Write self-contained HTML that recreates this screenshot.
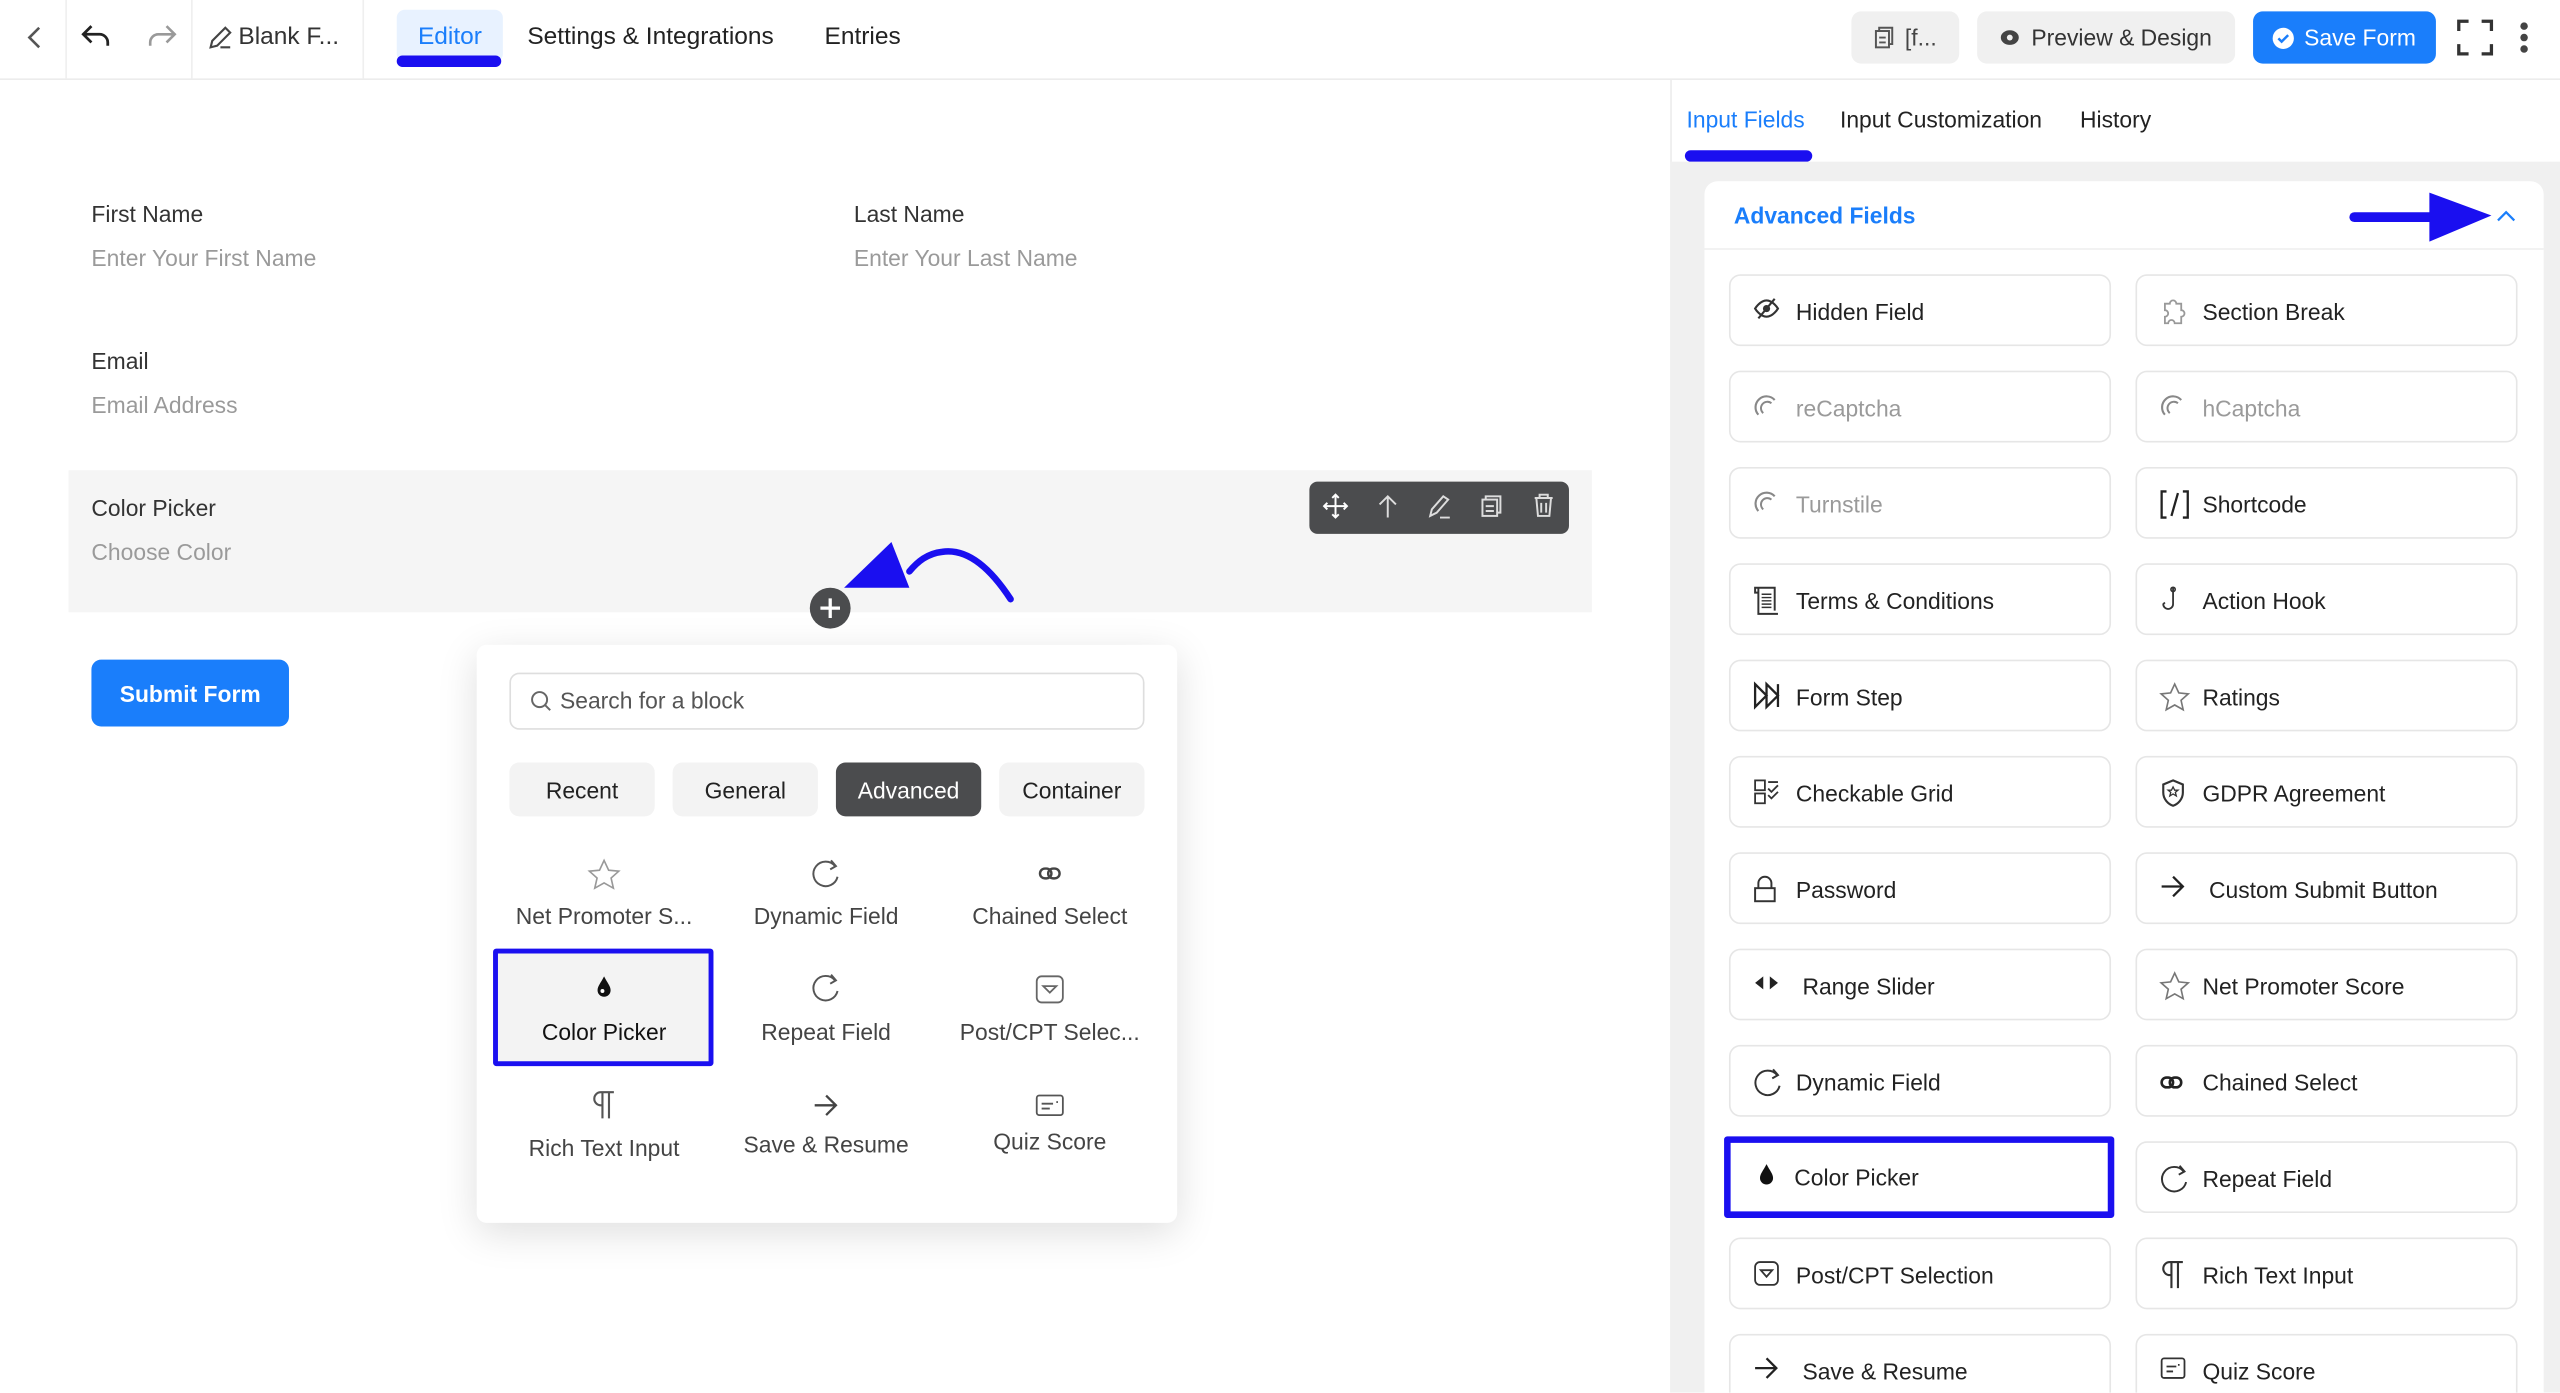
<!DOCTYPE html>
<html><head><meta charset="utf-8">
<style>
*{box-sizing:border-box;margin:0;padding:0}
html,body{width:2560px;height:1393px;overflow:hidden;background:#fff}
#w{position:absolute;left:0;top:0;width:1568px;height:853px;overflow:hidden;transform:scale(1.632653);transform-origin:0 0;font-family:"Liberation Sans",Arial,sans-serif;color:#1e1f21}
.a{position:absolute}
.t{font-size:15px;white-space:nowrap}
svg{position:absolute;overflow:visible}
.btn{position:absolute;border-radius:6px;display:flex;align-items:center;justify-content:center;font-size:14px;font-weight:600}
.it{position:absolute;width:234px;height:44px;background:#fff;border:1px solid #e6e6e6;border-radius:7px}
.it span{position:absolute;left:40px;top:14px;font-size:14px;color:#222;white-space:nowrap}
.it svg{left:14px;top:13px}
.it.dim span{color:#9a9a9a}
.g{position:absolute;width:136px;text-align:center;font-size:14px;color:#444}
</style></head><body><div id="w">

<div class="a" style="left:0;top:48px;width:1568px;height:1px;background:#ececec"></div>
<div class="a" style="left:40px;top:0;width:1px;height:48px;background:#efefef"></div>
<div class="a" style="left:117px;top:0;width:1px;height:48px;background:#efefef"></div>
<div class="a" style="left:222px;top:0;width:1px;height:48px;background:#efefef"></div>
<svg style="left:15px;top:16px" width="12" height="14"><path d="M9 1L3 7l6 6" fill="none" stroke="#555" stroke-width="1.6"/></svg>
<svg style="left:50px;top:15px" width="18" height="14"><path d="M6 1L1 6l5 5M1 6h10a5 5 0 0 1 5 5v2" fill="none" stroke="#222" stroke-width="1.7"/></svg>
<svg style="left:90px;top:15px" width="18" height="14"><path d="M12 1l5 5-5 5M17 6H7a5 5 0 0 0-5 5v2" fill="none" stroke="#999" stroke-width="1.6"/></svg>
<svg style="left:127px;top:15px" width="16" height="16"><path d="M2 14l1-4 8-8 3 3-8 8zM8 14h6" fill="none" stroke="#444" stroke-width="1.3"/></svg>
<div class="a t" style="left:146px;top:14px;font-weight:500;color:#333">Blank F...</div>
<div class="a" style="left:243px;top:6px;width:65px;height:32px;background:#e8f2ff;border-radius:5px"></div>
<div class="a t" style="left:256px;top:14px;color:#1a7efb">Editor</div>
<div class="a" style="left:243px;top:34px;width:64px;height:7px;background:#1a0ff0;border-radius:4px"></div>
<div class="a t" style="left:323px;top:14px;color:#222">Settings &amp; Integrations</div>
<div class="a t" style="left:505px;top:14px;color:#222">Entries</div>

<div class="btn" style="left:1134px;top:7px;width:66px;height:32px;background:#f0f0f0;color:#444;font-weight:500">
<svg style="position:static;margin-right:7px" width="12" height="14"><rect x="1" y="3" width="8" height="10" fill="none" stroke="#555" stroke-width="1.2"/><path d="M3 3V1h8v10H9M3 7h4M3 10h4" fill="none" stroke="#555" stroke-width="1.2"/></svg>[f...</div>
<div class="btn" style="left:1211px;top:7px;width:158px;height:32px;background:#f0f0f0;color:#333;font-weight:500">
<svg style="position:static;margin-right:7px" width="12" height="10"><ellipse cx="6" cy="5" rx="5.5" ry="4.5" fill="#444"/><circle cx="6" cy="5" r="1.8" fill="#f0f0f0"/></svg>Preview &amp; Design</div>
<div class="btn" style="left:1380px;top:7px;width:112px;height:32px;background:#1a7efb;color:#fff;font-weight:500">
<svg style="position:static;margin-right:6px" width="13" height="13"><circle cx="6.5" cy="6.5" r="6.5" fill="#fff"/><path d="M3.5 6.5l2 2 4-4" fill="none" stroke="#1a7efb" stroke-width="1.5"/></svg>Save Form</div>
<svg style="left:1505px;top:12px" width="22" height="22"><path d="M1 7V1h6M15 1h6v6M21 15v6h-6M7 21H1v-6" fill="none" stroke="#333" stroke-width="2"/></svg>
<svg style="left:1543px;top:13px" width="6" height="20"><circle cx="3" cy="3" r="2.3" fill="#444"/><circle cx="3" cy="10" r="2.3" fill="#444"/><circle cx="3" cy="17" r="2.3" fill="#444"/></svg>

<div class="a" style="left:56px;top:123px;font-size:14px;color:#333">First Name</div>
<div class="a" style="left:56px;top:150px;font-size:14px;color:#9a9a9a">Enter Your First Name</div>
<div class="a" style="left:523px;top:123px;font-size:14px;color:#333">Last Name</div>
<div class="a" style="left:523px;top:150px;font-size:14px;color:#9a9a9a">Enter Your Last Name</div>
<div class="a" style="left:56px;top:213px;font-size:14px;color:#333">Email</div>
<div class="a" style="left:56px;top:240px;font-size:14px;color:#9a9a9a">Email Address</div>
<div class="a" style="left:42px;top:288px;width:933px;height:87px;background:#f5f5f5"></div>
<div class="a" style="left:56px;top:303px;font-size:14px;color:#333">Color Picker</div>
<div class="a" style="left:56px;top:330px;font-size:14px;color:#9a9a9a">Choose Color</div>
<div class="a" style="left:802px;top:295px;width:159px;height:32px;background:#4b4c4e;border-radius:5px"></div>
<svg style="left:811px;top:303px" width="14" height="14"><path d="M7 0v14M0 7h14M5 2l2-2 2 2M5 12l2 2 2-2M2 5L0 7l2 2M12 5l2 2-2 2" fill="none" stroke="#fff" stroke-width="1.2"/></svg>
<svg style="left:844px;top:303px" width="12" height="14"><path d="M6 14V1M1 6l5-5 5 5" fill="none" stroke="#ddd" stroke-width="1.2"/></svg>
<svg style="left:875px;top:302px" width="14" height="16"><path d="M1 14l1-4 7-8 3 2-7 8zM7 15h6" fill="none" stroke="#ddd" stroke-width="1.2"/></svg>
<svg style="left:907px;top:303px" width="14" height="14"><rect x="1" y="3" width="9" height="10" fill="none" stroke="#ddd" stroke-width="1.2"/><path d="M3 3V1h9v10h-2M3 7h5M3 10h5" fill="none" stroke="#ddd" stroke-width="1.2"/></svg>
<svg style="left:939px;top:302px" width="13" height="15"><path d="M1 3h11M4 3V1h5v2M2 3l1 11h7l1-11M5 6v6M8 6v6" fill="none" stroke="#ddd" stroke-width="1.2"/></svg>

<div class="btn" style="left:56px;top:404px;width:121px;height:41px;background:#1a7efb;color:#fff">Submit Form</div>

<div class="a" style="left:292px;top:395px;width:429px;height:354px;background:#fff;border-radius:6px;box-shadow:0 6px 24px rgba(0,0,0,.13)"></div>
<div class="a" style="left:312px;top:412px;width:389px;height:35px;border:1px solid #dedede;border-radius:6px"></div>
<svg style="left:325px;top:423px" width="13" height="13"><circle cx="5.5" cy="5.5" r="4.6" fill="none" stroke="#666" stroke-width="1.2"/><path d="M9 9l3 3" stroke="#666" stroke-width="1.2"/></svg>
<div class="a" style="left:343px;top:421px;font-size:14px;color:#555">Search for a block</div>
<div class="btn" style="left:312px;top:467px;width:89px;height:33px;background:#f3f3f3;color:#222;font-weight:500">Recent</div>
<div class="btn" style="left:412px;top:467px;width:89px;height:33px;background:#f3f3f3;color:#222;font-weight:500">General</div>
<div class="btn" style="left:512px;top:467px;width:89px;height:33px;background:#4b4c4e;color:#fff;font-weight:500">Advanced</div>
<div class="btn" style="left:612px;top:467px;width:89px;height:33px;background:#f3f3f3;color:#222;font-weight:500">Container</div>

<div class="a" style="left:302px;top:581px;width:135px;height:72px;background:#f3f3f3;border:3px solid #1a0ff0;border-radius:2px"></div>
<svg style="left:360px;top:526px" width="20" height="19"><path d="M10 1l2.8 6 6.2.6-4.7 4.2 1.4 6.2L10 14.8 4.3 18l1.4-6.2L1 7.6 7.2 7z" fill="none" stroke="#999" stroke-width="1"/></svg>
<div class="g" style="left:302px;top:553px">Net Promoter S...</div>
<svg style="left:497px;top:526px" width="18" height="18"><path d="M14.5 4.5A7.5 7.5 0 1 0 16 11" fill="none" stroke="#555" stroke-width="1.2"/><path d="M12 1l3 3.5-3.5 2" fill="none" stroke="#555" stroke-width="1.2"/></svg>
<div class="g" style="left:438px;top:553px">Dynamic Field</div>
<svg style="left:636px;top:530px" width="14" height="10"><rect x="1" y="2" width="7" height="6" rx="3" fill="none" stroke="#444" stroke-width="1.5"/><rect x="6" y="2" width="7" height="6" rx="3" fill="none" stroke="#444" stroke-width="1.5"/></svg>
<div class="g" style="left:575px;top:553px">Chained Select</div>
<svg style="left:365px;top:597px" width="10" height="14"><path d="M5 1C3 5 1 7 1 9.5a4 4 0 0 0 8 0C9 7 7 5 5 1z" fill="#111"/><circle cx="4" cy="10" r="1.2" fill="#fff"/></svg>
<div class="g" style="left:302px;top:624px;color:#111">Color Picker</div>
<svg style="left:497px;top:596px" width="18" height="18"><path d="M14.5 4.5A7.5 7.5 0 1 0 16 11" fill="none" stroke="#555" stroke-width="1.2"/><path d="M12 1l3 3.5-3.5 2" fill="none" stroke="#555" stroke-width="1.2"/></svg>
<div class="g" style="left:438px;top:624px">Repeat Field</div>
<svg style="left:634px;top:597px" width="18" height="18"><rect x="1" y="1" width="16" height="16" rx="3" fill="none" stroke="#666" stroke-width="1.1"/><path d="M5 7h8l-4 4z" fill="none" stroke="#666" stroke-width="1.1"/></svg>
<div class="g" style="left:575px;top:624px">Post/CPT Selec...</div>
<svg style="left:362px;top:668px" width="16" height="18"><path d="M7 1v16M11 1v16M14 1H6a4 4 0 0 0 0 8h1" fill="none" stroke="#555" stroke-width="1.3"/></svg>
<div class="g" style="left:302px;top:695px">Rich Text Input</div>
<svg style="left:498px;top:670px" width="16" height="14"><path d="M1 7h13M8 1l6 6-6 6" fill="none" stroke="#444" stroke-width="1.4"/></svg>
<div class="g" style="left:438px;top:693px">Save &amp; Resume</div>
<svg style="left:634px;top:670px" width="18" height="14"><rect x="1" y="1" width="16" height="12" rx="1.5" fill="none" stroke="#555" stroke-width="1.1"/><path d="M4 6h7M4 9h5M13 5h1" stroke="#555" stroke-width="1.1"/></svg>
<div class="g" style="left:575px;top:691px">Quiz Score</div>

<div class="a" style="left:496px;top:360px;width:25px;height:25px;border-radius:50%;background:#4b4c4e"></div>
<svg style="left:496px;top:360px" width="25" height="25"><path d="M12.5 6.5v12M6.5 12.5h12" stroke="#fff" stroke-width="2"/></svg>
<svg style="left:500px;top:320px" width="140" height="60"><path d="M119 47C104 24 90 16 77 18 68 19 62 24 57 30" fill="none" stroke="#1a0ff0" stroke-width="4" stroke-linecap="round"/><path d="M46 12L17 40 57 40z" fill="#1a0ff0"/></svg>

<div class="a" style="left:1023px;top:49px;width:545px;height:804px;background:#fff;border-left:1px solid #ececec"></div>
<div class="a" style="left:1023px;top:99px;width:545px;height:754px;background:#f0f0f0"></div>
<div class="a t" style="left:1033px;top:65px;color:#1a7efb;font-size:14px">Input Fields</div>
<div class="a t" style="left:1127px;top:65px;color:#222;font-size:14px">Input Customization</div>
<div class="a t" style="left:1274px;top:65px;color:#222;font-size:14px">History</div>
<div class="a" style="left:1032px;top:92px;width:78px;height:7px;background:#1a0ff0;border-radius:4px"></div>
<div class="a" style="left:1044px;top:111px;width:514px;height:742px;background:#fff;border-radius:8px 8px 0 0"></div>
<div class="a" style="left:1044px;top:152px;width:514px;height:1px;background:#efefef"></div>
<div class="a" style="left:1062px;top:124px;font-size:14px;font-weight:600;color:#1a7efb">Advanced Fields</div>
<svg style="left:1438px;top:117px" width="106" height="32"><path d="M4 16h50" stroke="#1a0ff0" stroke-width="6" stroke-linecap="round"/><path d="M50 1L88 15 50 31z" fill="#1a0ff0"/><path d="M92 18l5-5 5 5" fill="none" stroke="#1a7efb" stroke-width="1.4"/></svg>

<div class="it" style="left:1059px;top:168px"><svg width="16" height="14"><path d="M1 7s3-5 7-5 7 5 7 5-3 5-7 5-7-5-7-5z" fill="none" stroke="#333" stroke-width="1.3"/><circle cx="8" cy="7" r="2.2" fill="#333"/><path d="M3 13L13 1" stroke="#333" stroke-width="1.3"/></svg><span>Hidden Field</span></div>
<div class="it dim" style="left:1059px;top:227px"><svg width="16" height="16"><path d="M3 13A6 6 0 1 1 13 4" fill="none" stroke="#888" stroke-width="1.3"/><path d="M6 12A3.5 3.5 0 1 1 11 6" fill="none" stroke="#888" stroke-width="1.2"/></svg><span>reCaptcha</span></div>
<div class="it dim" style="left:1059px;top:286px"><svg width="16" height="16"><path d="M3 13A6 6 0 1 1 13 4" fill="none" stroke="#888" stroke-width="1.3"/><path d="M6 12A3.5 3.5 0 1 1 11 6" fill="none" stroke="#888" stroke-width="1.2"/></svg><span>Turnstile</span></div>
<div class="it" style="left:1059px;top:345px"><svg width="16" height="18"><path d="M3 1h10v14M3 1v16h12M3 1H1v3h2" fill="none" stroke="#333" stroke-width="1.2"/><path d="M5 5h6M5 7h6M5 9h6M5 11h6M5 13h6" stroke="#333" stroke-width=".9"/></svg><span>Terms &amp; Conditions</span></div>
<div class="it" style="left:1059px;top:404px"><svg width="16" height="16"><path d="M1 1l7 7-7 7zM8 1l7 7-7 7zM15 1v14" fill="none" stroke="#222" stroke-width="1.4"/></svg><span>Form Step</span></div>
<div class="it" style="left:1059px;top:463px"><svg width="16" height="16"><rect x="1" y="1" width="6" height="6" fill="none" stroke="#333" stroke-width="1.1"/><rect x="1" y="9" width="6" height="6" fill="none" stroke="#333" stroke-width="1.1"/><path d="M9 2h6M9 6l2 2 4-4M9 10l2 2 4-4" fill="none" stroke="#333" stroke-width="1.1"/></svg><span>Checkable Grid</span></div>
<div class="it" style="left:1059px;top:522px"><svg width="14" height="17"><path d="M3 8V5a4 4 0 0 1 8 0v3" fill="none" stroke="#333" stroke-width="1.2"/><rect x="1" y="8" width="12" height="8" fill="none" stroke="#333" stroke-width="1.2"/></svg><span>Password</span></div>
<div class="it" style="left:1059px;top:581px"><svg width="16" height="14"><path d="M1 7l5-4v8zM15 7l-5-4v8z" fill="#222"/></svg><span style="left:44px">Range Slider</span></div>
<div class="it" style="left:1059px;top:640px"><svg width="18" height="18"><path d="M14.5 4.5A7.5 7.5 0 1 0 16 11" fill="none" stroke="#333" stroke-width="1.2"/><path d="M12 1l3 3.5-3.5 2" fill="none" stroke="#333" stroke-width="1.2"/></svg><span>Dynamic Field</span></div>
<div class="a" style="left:1056px;top:696px;width:239px;height:50px;border:4px solid #1a0ff0;border-radius:2px;background:#fff"></div>
<svg style="left:1077px;top:712px" width="10" height="14"><path d="M5 1C3 5 1 7 1 9.5a4 4 0 0 0 8 0C9 7 7 5 5 1z" fill="#111"/></svg>
<div class="a" style="left:1099px;top:713px;font-size:14px;color:#222">Color Picker</div>
<div class="it" style="left:1059px;top:758px"><svg width="16" height="16"><rect x="1" y="1" width="14" height="14" rx="3" fill="none" stroke="#333" stroke-width="1.1"/><path d="M4.5 6h7L8 10z" fill="none" stroke="#333" stroke-width="1.1"/></svg><span>Post/CPT Selection</span></div>
<div class="it" style="left:1059px;top:817px"><svg width="16" height="14"><path d="M1 7h13M8 1l6 6-6 6" fill="none" stroke="#222" stroke-width="1.4"/></svg><span style="left:44px">Save &amp; Resume</span></div>

<div class="it" style="left:1308px;top:168px"><svg width="16" height="18"><path d="M3 4h3a2 2 0 0 1 4 0h3v4a2 2 0 0 1 0 4v4H9a2 2 0 0 0-4 0H3v-4a2 2 0 0 0 0-4z" fill="none" stroke="#999" stroke-width="1.1"/></svg><span>Section Break</span></div>
<div class="it dim" style="left:1308px;top:227px"><svg width="16" height="16"><path d="M3 13A6 6 0 1 1 13 4" fill="none" stroke="#888" stroke-width="1.3"/><path d="M6 12A3.5 3.5 0 1 1 11 6" fill="none" stroke="#888" stroke-width="1.2"/></svg><span>hCaptcha</span></div>
<div class="it" style="left:1308px;top:286px"><svg width="18" height="18"><path d="M4 1H1v16h3M14 1h3v16h-3M11 2L7 16" fill="none" stroke="#222" stroke-width="1.4"/></svg><span>Shortcode</span></div>
<div class="it" style="left:1308px;top:345px"><svg width="14" height="18"><path d="M8 1v10a3 3 0 1 1-6 0l1-1" fill="none" stroke="#333" stroke-width="1.1"/><circle cx="8" cy="2" r="1.3" fill="none" stroke="#333"/></svg><span>Action Hook</span></div>
<div class="it" style="left:1308px;top:404px"><svg width="18" height="18"><path d="M9 1l2.5 5.4 5.8.6-4.4 3.9 1.3 5.8L9 13.8 3.8 16.7l1.3-5.8L.7 7l5.8-.6z" fill="none" stroke="#777" stroke-width="1"/></svg><span>Ratings</span></div>
<div class="it" style="left:1308px;top:463px"><svg width="16" height="18"><path d="M8 1l6 2.5v5c0 4-3 7-6 8-3-1-6-4-6-8v-5z" fill="none" stroke="#333" stroke-width="1.3"/><path d="M8 5l1 2h2l-1.6 1.3.6 2.2L8 9.3 6 10.5l.6-2.2L5 7h2z" fill="none" stroke="#333" stroke-width=".8"/></svg><span>GDPR Agreement</span></div>
<div class="it" style="left:1308px;top:522px"><svg width="16" height="14"><path d="M1 7h13M8 1l6 6-6 6" fill="none" stroke="#222" stroke-width="1.4"/></svg><span style="left:44px">Custom Submit Button</span></div>
<div class="it" style="left:1308px;top:581px"><svg width="18" height="18"><path d="M9 1l2.5 5.4 5.8.6-4.4 3.9 1.3 5.8L9 13.8 3.8 16.7l1.3-5.8L.7 7l5.8-.6z" fill="none" stroke="#777" stroke-width="1"/></svg><span>Net Promoter Score</span></div>
<div class="it" style="left:1308px;top:640px"><svg width="14" height="10" style="top:17px"><rect x="1" y="2" width="7" height="6" rx="3" fill="none" stroke="#222" stroke-width="1.6"/><rect x="6" y="2" width="7" height="6" rx="3" fill="none" stroke="#222" stroke-width="1.6"/></svg><span>Chained Select</span></div>
<div class="it" style="left:1308px;top:699px"><svg width="18" height="18"><path d="M14.5 4.5A7.5 7.5 0 1 0 16 11" fill="none" stroke="#333" stroke-width="1.2"/><path d="M12 1l3 3.5-3.5 2" fill="none" stroke="#333" stroke-width="1.2"/></svg><span>Repeat Field</span></div>
<div class="it" style="left:1308px;top:758px"><svg width="16" height="18"><path d="M7 1v16M11 1v16M14 1H6a4 4 0 0 0 0 8h1" fill="none" stroke="#333" stroke-width="1.3"/></svg><span>Rich Text Input</span></div>
<div class="it" style="left:1308px;top:817px"><svg width="16" height="14"><rect x="1" y="1" width="14" height="12" rx="1.5" fill="none" stroke="#333" stroke-width="1.1"/><path d="M4 6h6M4 9h4M11 5h1" stroke="#333" stroke-width="1.1"/></svg><span>Quiz Score</span></div>

</div></body></html>
